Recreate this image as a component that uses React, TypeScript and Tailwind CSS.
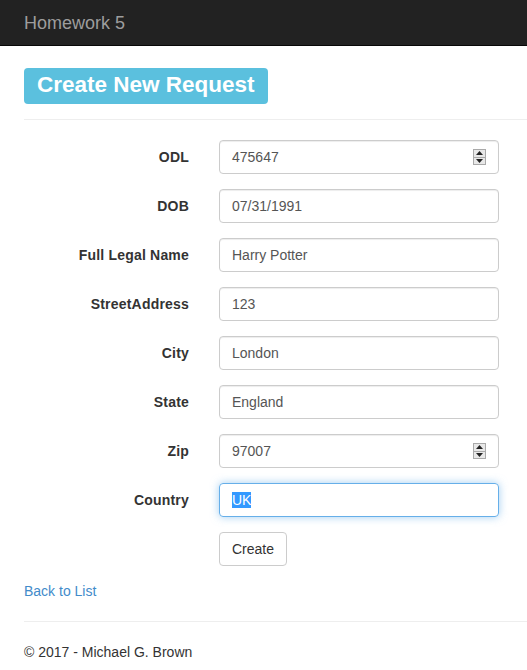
const font = { fontFamily: '"Liberation Sans", Arial, sans-serif' };

type Field = { label: string; value: string; spinner?: boolean; focused?: boolean };

const fields: Field[] = [
  { label: "ODL", value: "475647", spinner: true },
  { label: "DOB", value: "07/31/1991" },
  { label: "Full Legal Name", value: "Harry Potter" },
  { label: "StreetAddress", value: "123" },
  { label: "City", value: "London" },
  { label: "State", value: "England" },
  { label: "Zip", value: "97007", spinner: true },
  { label: "Country", value: "UK", focused: true },
];

function Spinner() {
  return (
    <div className="flex h-[16px] w-[13px] flex-col border border-[#a9a9a9] bg-[#e8e8e8]">
      <div className="flex flex-1 items-center justify-center border-b border-[#a9a9a9]">
        <svg width="7" height="4" viewBox="0 0 7 4">
          <path d="M0 4 L3.5 0 L7 4 Z" fill="#222" />
        </svg>
      </div>
      <div className="flex flex-1 items-center justify-center">
        <svg width="7" height="4" viewBox="0 0 7 4">
          <path d="M0 0 L3.5 4 L7 0 Z" fill="#222" />
        </svg>
      </div>
    </div>
  );
}

function Row({ f }: { f: Field }) {
  return (
    <div className="flex items-center gap-[30px]">
      <label className="w-[165px] text-right text-[14px] font-bold tracking-[0.2px] text-[#333]">{f.label}</label>
      <div
        className={
          f.focused
            ? "flex h-[34px] w-[280px] items-center justify-between rounded-[4px] border border-[#66afe9] px-[12px] shadow-[0_0_8px_rgba(102,175,233,0.6)]"
            : "flex h-[34px] w-[280px] items-center justify-between rounded-[4px] border border-[#ccc] px-[12px] shadow-[inset_0_1px_1px_rgba(0,0,0,0.075)]"
        }
      >
        {f.focused ? (
          <span className="bg-[#3399ff] text-[14px] leading-[16px] text-white">{f.value}</span>
        ) : (
          <span className="text-[14px] text-[#555]">{f.value}</span>
        )}
        {f.spinner && <Spinner />}
      </div>
    </div>
  );
}

export default function App() {
  return (
    <div style={font} className="min-h-screen bg-white text-[14px] leading-[20px] text-[#333]">
      <nav className="flex h-[46px] items-center border-b border-[#080808] bg-[#222] px-6">
        <span className="text-[18px] text-[#9d9d9d]">Homework 5</span>
      </nav>

      <div className="pl-6">
        <div className="mt-[22px] inline-flex h-[36px] items-center rounded-[4px] bg-[#5bc0de] px-[13px] pb-[2px] text-[22.5px] font-bold leading-none text-white">
          Create New Request
        </div>
        <hr className="mt-[15px] border-t border-[#eee]" />

        <form className="mt-[20px] flex flex-col gap-[15px]">
          {fields.map((f) => (
            <Row key={f.label} f={f} />
          ))}
          <div className="pl-[195px]">
            <button
              type="button"
              className="h-[34px] rounded-[4px] border border-[#ccc] bg-white px-[12px] text-[14px] text-[#333]"
            >
              Create
            </button>
          </div>
        </form>

        <div className="mt-[15px]">
          <a href="#" className="text-[#428bca]">
            Back to List
          </a>
        </div>

        <hr className="mt-[20px] border-t border-[#eee]" />
        <footer className="mt-[20px] pb-4">
          <p>© 2017 - Michael G. Brown</p>
        </footer>
      </div>
    </div>
  );
}
